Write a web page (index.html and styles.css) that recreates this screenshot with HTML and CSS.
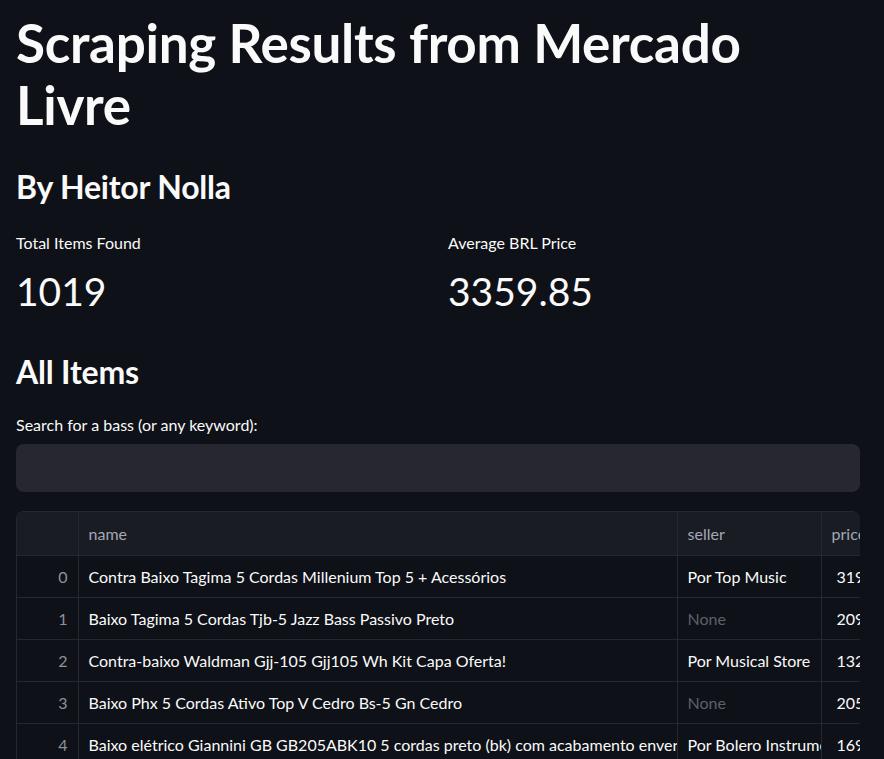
FILE: index.html
```html
<!DOCTYPE html>
<html lang="en">
<head>
<meta charset="utf-8">
<title>Scraping Results from Mercado Livre</title>
<link rel="stylesheet" href="styles.css">
</head>
<body>
<main class="main">
  <h1 class="title">Scraping Results from Mercado Livre</h1>
  <h2 class="subtitle">By Heitor Nolla</h2>
  <div class="metrics">
    <div class="metric">
      <div class="metric-label">Total Items Found</div>
      <div class="metric-value">1019</div>
    </div>
    <div class="metric">
      <div class="metric-label">Average BRL Price</div>
      <div class="metric-value">3359.85</div>
    </div>
  </div>
  <h2 class="section">All Items</h2>
  <label class="field-label" for="q">Search for a bass (or any keyword):</label>
  <input class="field-input" id="q" type="text">
  <div class="grid-wrap">
    <table class="grid">
      <colgroup>
        <col class="c-idx"><col class="c-name"><col class="c-seller"><col class="c-price">
      </colgroup>
      <thead>
        <tr><th></th><th>name</th><th>seller</th><th>price</th></tr>
      </thead>
      <tbody>
        <tr><td class="idx">0</td><td>Contra Baixo Tagima 5 Cordas Millenium Top 5 + Acessórios</td><td>Por Top Music</td><td class="num">3199.00</td></tr>
        <tr><td class="idx">1</td><td>Baixo Tagima 5 Cordas Tjb-5 Jazz Bass Passivo Preto</td><td class="none">None</td><td class="num">2099.00</td></tr>
        <tr><td class="idx">2</td><td>Contra-baixo Waldman Gjj-105 Gjj105 Wh Kit Capa Oferta!</td><td>Por Musical Store</td><td class="num">1329.00</td></tr>
        <tr><td class="idx">3</td><td>Baixo Phx 5 Cordas Ativo Top V Cedro Bs-5 Gn Cedro</td><td class="none">None</td><td class="num">2059.00</td></tr>
        <tr><td class="idx">4</td><td>Baixo elétrico Giannini GB GB205ABK10 5 cordas preto (bk) com acabamento envernizado</td><td>Por Bolero Instrumentos</td><td class="num">1699.00</td></tr>
      </tbody>
    </table>
  </div>
</main>
</body>
</html>
```

FILE: styles.css
```css
html, body {
  margin: 0;
  padding: 0;
  background: #0e1117;
  color: #fafafa;
  font-family: Lato, "Open Sans", sans-serif;
}
body { height: 759px; overflow: hidden; }

.main {
  padding: 0 24px 0 16px;
  display: flex;
  flex-direction: column;
}

.title {
  margin: 0;
  padding-top: 12px;
  font-size: 53px;
  line-height: 62px;
  font-weight: 700;
  letter-spacing: -0.3px;
}

.subtitle, .section {
  margin: 0;
  font-size: 32px;
  line-height: 40px;
  font-weight: 700;
  letter-spacing: -0.2px;
}
.subtitle { margin-top: 31px; }
.section { margin-top: 36px; }

.metrics {
  display: grid;
  grid-template-columns: 1fr 1fr;
  column-gap: 20px;
  margin-top: 26px;
}
.metric-label {
  font-size: 16px;
  line-height: 20px;
}
.metric-value {
  font-size: 39px;
  line-height: 50px;
  font-weight: 400;
  margin-top: 13px;
}

.field-label {
  margin-top: 23px;
  font-size: 16px;
  line-height: 20px;
}
.field-input {
  margin-top: 9px;
  height: 48px;
  box-sizing: border-box;
  border: none;
  border-radius: 8px;
  background: #262730;
  color: #fafafa;
  padding: 0 16px;
  font: inherit;
  outline: none;
}

.grid-wrap {
  margin-top: 19px;
  border: 1px solid #262830;
  border-right: none;
  border-radius: 8px 8px 0 0;
  overflow: hidden;
  width: 843px;
}
.grid {
  border-collapse: collapse;
  table-layout: fixed;
  width: 904px;
  font-size: 16px;
}
.c-idx { width: 61px; }
.c-name { width: 599px; }
.c-seller { width: 144px; }
.c-price { width: 100px; }

.grid th, .grid td {
  border-left: 1px solid #262830;
  border-bottom: 1px solid #262830;
  padding: 0 10px;
  white-space: nowrap;
  overflow: hidden;
  text-align: left;
}
.grid th:first-child, .grid td:first-child { border-left: none; }
.grid tbody tr:last-child td { border-bottom: none; }
.grid th {
  background: #1a1c24;
  color: #a3a8b4;
  font-weight: 400;
  height: 43px;
}
.grid td {
  height: 41px;
  color: #fafafa;
}
.grid td.idx {
  text-align: right;
  color: #8f929b;
}
.grid td.num { padding-left: 15px; }
.grid td.none { color: #5d6068; }
```
